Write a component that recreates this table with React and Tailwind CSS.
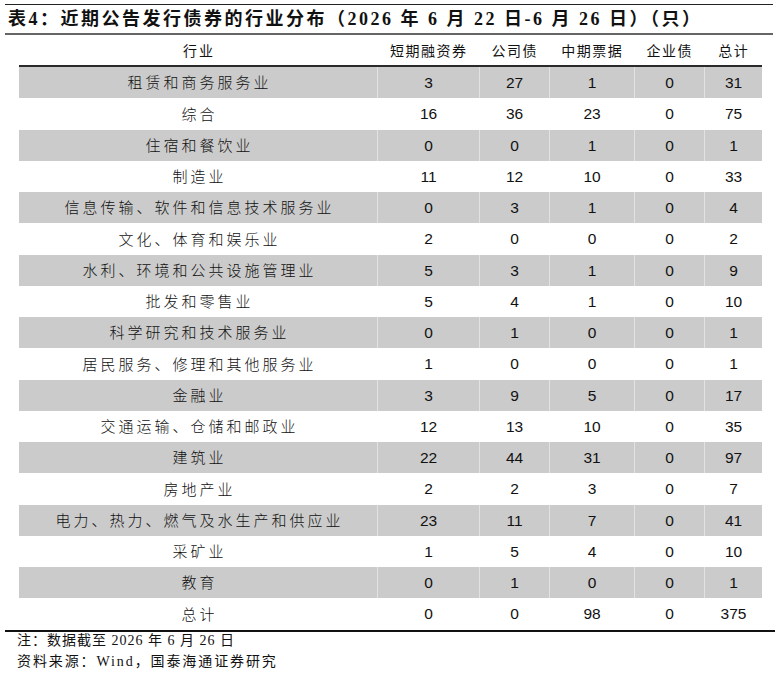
import React from "react";

const rows = [
  ["租赁和商务服务业", 3, 27, 1, 0, 31],
  ["综合", 16, 36, 23, 0, 75],
  ["住宿和餐饮业", 0, 0, 1, 0, 1],
  ["制造业", 11, 12, 10, 0, 33],
  ["信息传输、软件和信息技术服务业", 0, 3, 1, 0, 4],
  ["文化、体育和娱乐业", 2, 0, 0, 0, 2],
  ["水利、环境和公共设施管理业", 5, 3, 1, 0, 9],
  ["批发和零售业", 5, 4, 1, 0, 10],
  ["科学研究和技术服务业", 0, 1, 0, 0, 1],
  ["居民服务、修理和其他服务业", 1, 0, 0, 0, 1],
  ["金融业", 3, 9, 5, 0, 17],
  ["交通运输、仓储和邮政业", 12, 13, 10, 0, 35],
  ["建筑业", 22, 44, 31, 0, 97],
  ["房地产业", 2, 2, 3, 0, 7],
  ["电力、热力、燃气及水生产和供应业", 23, 11, 7, 0, 41],
  ["采矿业", 1, 5, 4, 0, 10],
  ["教育", 0, 1, 0, 0, 1],
  ["总计", 0, 0, 98, 0, 375],
];

const headers = ["短期融资券", "公司债", "中期票据", "企业债", "总计"];

const cjk = { fontFamily: '"Noto Sans CJK SC", sans-serif' };
const serif = { fontFamily: '"Liberation Serif", "Noto Sans CJK SC", serif' };
const num = { fontFamily: '"Liberation Sans", Arial, sans-serif' };

const grid = "grid grid-cols-[358px_102px_70px_85px_70px_58px]";

export default function App() {
  return (
    <div className="w-[781px] h-[674px] bg-white text-black overflow-hidden">
      <div className="pt-[4px] pl-[5px] w-[770px]">
        <div className="h-px bg-[#222] w-[768px]" />
        <div
          className="h-[28px] flex items-center pl-[3px] text-[18px] font-bold tracking-[2.5px] text-[#111]"
          style={serif}
        >
          表4：近期公告发行债券的行业分布（2026 年 6 月 22 日-6 月 26 日）（只）
        </div>
        <div className="h-[2px] bg-[#666] w-[768px]" />
        <div className="pl-[14px]">
          <div className={`${grid} h-[30px] items-center text-[14px] text-[#111]`} style={cjk}>
            <div className="text-center tracking-[2px] pl-[2px]">行业</div>
            {headers.map((h) => (
              <div key={h} className="text-center tracking-[1.5px] pl-[1.5px]">
                {h}
              </div>
            ))}
          </div>
          <div className="h-[2px] bg-[#2a2a2a] w-[743px]" />
          {rows.map((r, i) => {
            const gray = i % 2 === 0 && i !== 17;
            return (
              <div
                key={r[0]}
                className={`${grid} h-[31.25px] w-[743px] ${gray ? "bg-[#cbcbcb]" : "bg-white"}`}
              >
                <div
                  className="flex items-center justify-center text-[15px] font-light tracking-[3px] pl-[3px] text-[#111]"
                  style={cjk}
                >
                  {r[0]}
                </div>
                {r.slice(1).map((v, j) => (
                  <div
                    key={j}
                    className={`flex items-center justify-center text-[15.5px] text-[#111] border-l ${
                      gray ? "border-[#e2e2e2]" : "border-white"
                    }`}
                    style={num}
                  >
                    {v}
                  </div>
                ))}
              </div>
            );
          })}
        </div>
        <div className="h-[2px] bg-[#111] w-[770px]" />
        <div className="pl-[12px] -mt-[2px] text-[14px] leading-[21px] text-[#111]" style={serif}>
          <div className="tracking-[1px]">注：数据截至 2026 年 6 月 26 日</div>
          <div className="tracking-[1.9px]">资料来源：Wind，国泰海通证券研究</div>
        </div>
      </div>
    </div>
  );
}
